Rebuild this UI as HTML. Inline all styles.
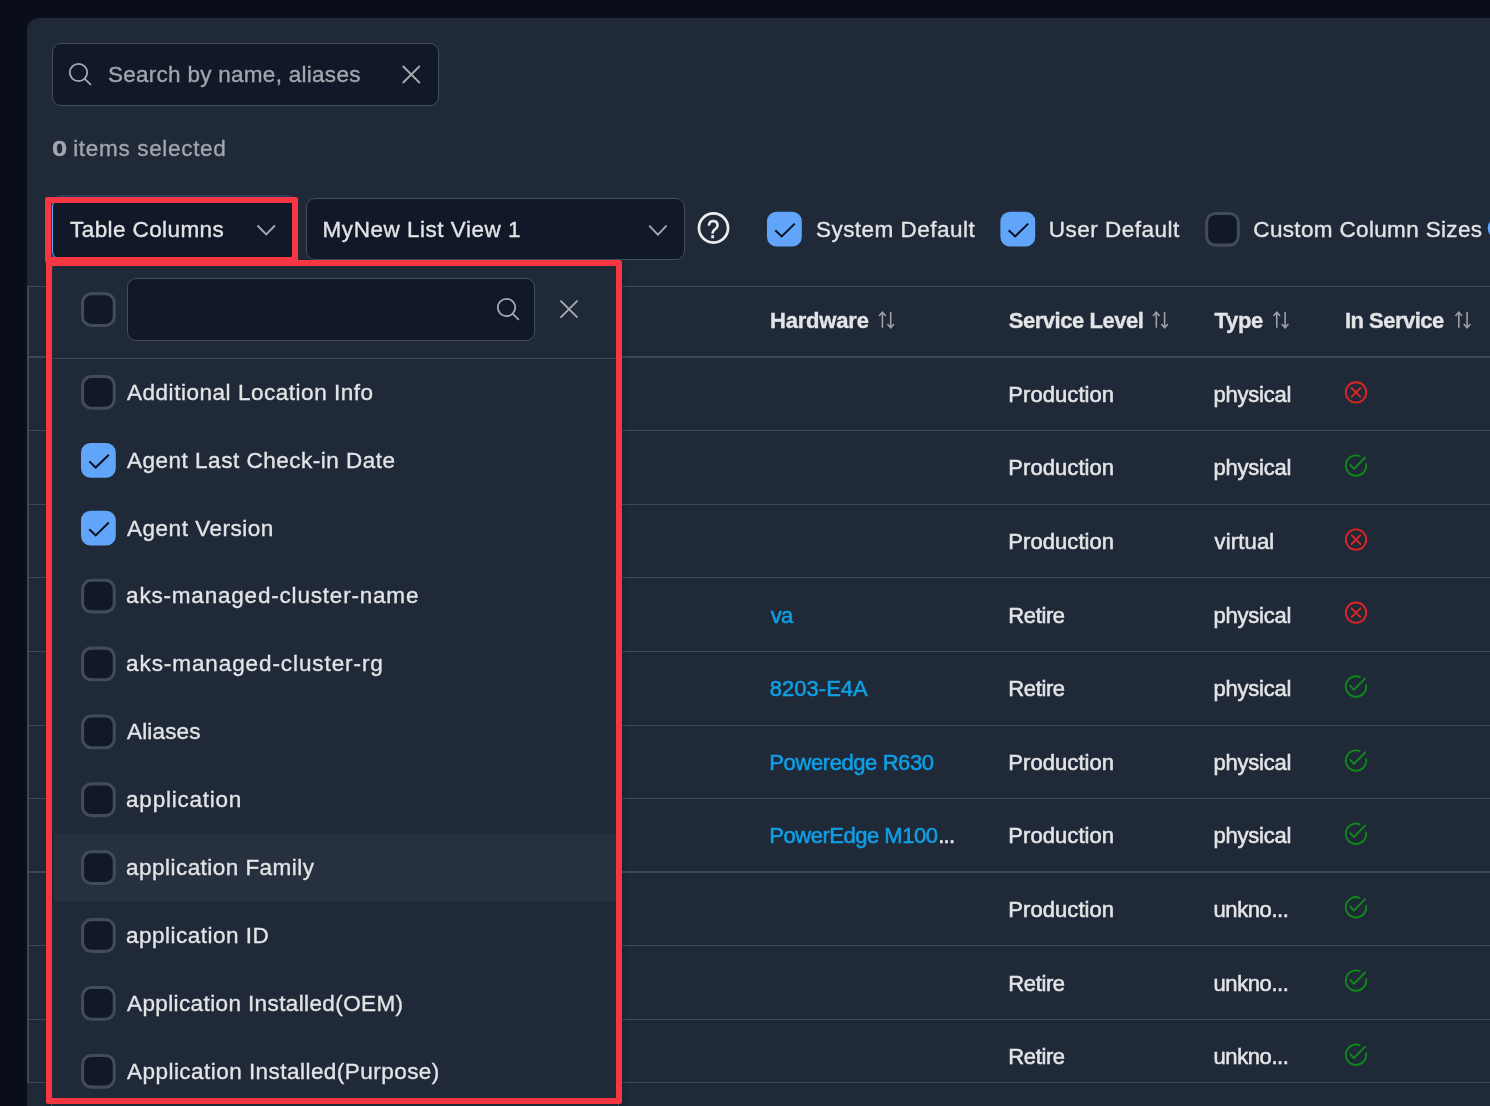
<!DOCTYPE html>
<html lang="en"><head><meta charset="utf-8"><title>Table Columns</title>
<style>
html,body{margin:0;padding:0}
body{width:1490px;height:1106px;overflow:hidden;position:relative;background:#0a0e1a;font-family:"Liberation Sans", sans-serif}
.a{position:absolute;box-sizing:border-box;display:block}
.t{position:absolute;white-space:pre;line-height:40px;height:40px}
.ln{position:absolute;height:1.5px;background:#3f4856}
</style></head><body>
<div class="a" style="left:27px;top:18px;width:1500px;height:1200px;background:#1f2937;border-radius:12px"></div>
<div class="a" style="left:52px;top:43px;width:387px;height:62.5px;background:#111827;border:1.5px solid #454e5b;border-radius:9px"></div>
<svg class="a" style="left:68px;top:62px" width="24" height="24" viewBox="0 0 24 24"><g transform="translate(0.9 0.9)"><circle cx="9.6" cy="9.6" r="8.7" fill="none" stroke="#a6a9af" stroke-width="1.8"/><path d="M15.9 15.9L21.5 21.5" stroke="#a6a9af" stroke-width="1.8" stroke-linecap="round"/></g></svg>
<svg class="a" style="left:401px;top:64px" width="21" height="21" viewBox="0 0 21 21"><g transform="translate(0.3 0.5)"><path d="M2.0 2.0L18.0 18.0M18.0 2.0L2.0 18.0" stroke="#a6a9af" stroke-width="1.9" stroke-linecap="round" fill="none"/></g></svg>
<div class="a" style="left:52px;top:198px;width:243px;height:62px;background:#111827;border:1.5px solid #60a5fa;border-radius:9px;box-shadow:0 0 0 3.1px rgba(96,165,250,.2)"></div>
<svg class="a" style="left:254px;top:222px" width="25" height="17" viewBox="0 0 25 17"><g transform="translate(0.2 0)"><path d="M3.3000000000000007 3.5L12 12.5L20.7 3.5" stroke="#a6a9af" stroke-width="1.9" stroke-linecap="butt" stroke-linejoin="miter" fill="none"/></g></svg>
<div class="a" style="left:306.2px;top:198px;width:378.4px;height:62px;background:#111827;border:1.5px solid #454e5b;border-radius:9px"></div>
<svg class="a" style="left:645px;top:222px" width="25" height="17" viewBox="0 0 25 17"><g transform="translate(0.9 0.2)"><path d="M3.3000000000000007 3.5L12 12.5L20.7 3.5" stroke="#a6a9af" stroke-width="1.9" stroke-linecap="butt" stroke-linejoin="miter" fill="none"/></g></svg>
<svg class="a" style="left:696px;top:210px" width="36" height="36" viewBox="0 0 36 36"><g transform="translate(0 0.5)"><circle cx="17.5" cy="17.5" r="14.55" fill="none" stroke="#ecedef" stroke-width="2.7"/></g></svg>
<svg class="a" style="left:767px;top:211px" width="36" height="36" viewBox="0 0 36 36"><g transform="translate(0.0 0.8)"><rect x="0" y="0" width="34.8" height="34.8" rx="9.5" fill="#60a5fa"/><path d="M8.3 18.5L14.7 24.6L27.8 11.8" stroke="#0b1120" stroke-width="2" stroke-linecap="butt" stroke-linejoin="miter" fill="none"/></g></svg>
<svg class="a" style="left:1000px;top:211px" width="36" height="36" viewBox="0 0 36 36"><g transform="translate(0.4 0.8)"><rect x="0" y="0" width="34.8" height="34.8" rx="9.5" fill="#60a5fa"/><path d="M8.3 18.5L14.7 24.6L27.8 11.8" stroke="#0b1120" stroke-width="2" stroke-linecap="butt" stroke-linejoin="miter" fill="none"/></g></svg>
<svg class="a" style="left:1205px;top:211px" width="36" height="36" viewBox="0 0 36 36"><g transform="translate(0.1 0.9)"><rect x="1.55" y="1.55" width="31.699999999999996" height="31.699999999999996" rx="8.8" fill="#111827" stroke="#424b59" stroke-width="3.1"/></g></svg>
<svg class="a" style="left:1487px;top:217px" width="4" height="24" viewBox="0 0 4 24"><g transform="translate(0 0)"><circle cx="11.7" cy="11.3" r="11" fill="#60a5fa"/></g></svg>
<div class="ln" style="left:27px;top:285.55px;width:1463px"></div>
<div class="ln" style="left:27px;top:356.45px;width:1463px"></div>
<div class="ln" style="left:27px;top:429.65px;width:1463px"></div>
<div class="ln" style="left:27px;top:503.65px;width:1463px"></div>
<div class="ln" style="left:27px;top:576.75px;width:1463px"></div>
<div class="ln" style="left:27px;top:650.55px;width:1463px"></div>
<div class="ln" style="left:27px;top:724.65px;width:1463px"></div>
<div class="ln" style="left:27px;top:797.85px;width:1463px"></div>
<div class="ln" style="left:27px;top:871.35px;width:1463px"></div>
<div class="ln" style="left:27px;top:944.65px;width:1463px"></div>
<div class="ln" style="left:27px;top:1018.85px;width:1463px"></div>
<div class="ln" style="left:27px;top:1081.75px;width:1463px"></div>
<div class="a" style="left:27px;top:286px;width:1.5px;height:796px;background:#3f4856"></div>
<svg class="a" style="left:878px;top:310px" width="19" height="20" viewBox="0 0 19 20"><g transform="translate(0.0 0.8)"><path d="M4.4 1.2V17M1.1 5.1L4.4 1.3L7.7 5.1M12.7 1.2V17M9.4 13.2L12.7 17L16 13.2" stroke="#9ca0a8" stroke-width="1.6" fill="none" stroke-linejoin="miter"/></g></svg>
<svg class="a" style="left:1151px;top:310px" width="19" height="20" viewBox="0 0 19 20"><g transform="translate(0.9 0.8)"><path d="M4.4 1.2V17M1.1 5.1L4.4 1.3L7.7 5.1M12.7 1.2V17M9.4 13.2L12.7 17L16 13.2" stroke="#9ca0a8" stroke-width="1.6" fill="none" stroke-linejoin="miter"/></g></svg>
<svg class="a" style="left:1272px;top:310px" width="19" height="20" viewBox="0 0 19 20"><g transform="translate(0.4 0.8)"><path d="M4.4 1.2V17M1.1 5.1L4.4 1.3L7.7 5.1M12.7 1.2V17M9.4 13.2L12.7 17L16 13.2" stroke="#9ca0a8" stroke-width="1.6" fill="none" stroke-linejoin="miter"/></g></svg>
<svg class="a" style="left:1454px;top:310px" width="19" height="20" viewBox="0 0 19 20"><g transform="translate(0.4 0.8)"><path d="M4.4 1.2V17M1.1 5.1L4.4 1.3L7.7 5.1M12.7 1.2V17M9.4 13.2L12.7 17L16 13.2" stroke="#9ca0a8" stroke-width="1.6" fill="none" stroke-linejoin="miter"/></g></svg>
<svg class="a" style="left:1344px;top:380px" width="25" height="25" viewBox="0 0 25 25"><g transform="translate(0 0.4)"><circle cx="12" cy="12" r="10.2" fill="none" stroke="#dc2626" stroke-width="1.9"/><path d="M7.6 7.6L16.4 16.4M16.4 7.6L7.6 16.4" stroke="#dc2626" stroke-width="1.9" stroke-linecap="round"/></g></svg>
<svg class="a" style="left:1344px;top:453px" width="25" height="25" viewBox="0 0 25 25"><g transform="translate(0 0.6)"><path d="M15.66 2.48A10.2 10.2 0 1 0 22.10 10.58" fill="none" stroke="#0e8a18" stroke-width="1.9" stroke-linecap="round"/><path d="M6.3 11.3L9.9 15.3L21.1 3.9" stroke="#0e8a18" stroke-width="1.9" stroke-linecap="round" stroke-linejoin="round" fill="none"/></g></svg>
<svg class="a" style="left:1344px;top:527px" width="25" height="25" viewBox="0 0 25 25"><g transform="translate(0 0.6)"><circle cx="12" cy="12" r="10.2" fill="none" stroke="#dc2626" stroke-width="1.9"/><path d="M7.6 7.6L16.4 16.4M16.4 7.6L7.6 16.4" stroke="#dc2626" stroke-width="1.9" stroke-linecap="round"/></g></svg>
<svg class="a" style="left:1344px;top:600px" width="25" height="25" viewBox="0 0 25 25"><g transform="translate(0 0.7)"><circle cx="12" cy="12" r="10.2" fill="none" stroke="#dc2626" stroke-width="1.9"/><path d="M7.6 7.6L16.4 16.4M16.4 7.6L7.6 16.4" stroke="#dc2626" stroke-width="1.9" stroke-linecap="round"/></g></svg>
<svg class="a" style="left:1344px;top:674px" width="25" height="25" viewBox="0 0 25 25"><g transform="translate(0 0.5)"><path d="M15.66 2.48A10.2 10.2 0 1 0 22.10 10.58" fill="none" stroke="#0e8a18" stroke-width="1.9" stroke-linecap="round"/><path d="M6.3 11.3L9.9 15.3L21.1 3.9" stroke="#0e8a18" stroke-width="1.9" stroke-linecap="round" stroke-linejoin="round" fill="none"/></g></svg>
<svg class="a" style="left:1344px;top:748px" width="25" height="25" viewBox="0 0 25 25"><g transform="translate(0 0.6)"><path d="M15.66 2.48A10.2 10.2 0 1 0 22.10 10.58" fill="none" stroke="#0e8a18" stroke-width="1.9" stroke-linecap="round"/><path d="M6.3 11.3L9.9 15.3L21.1 3.9" stroke="#0e8a18" stroke-width="1.9" stroke-linecap="round" stroke-linejoin="round" fill="none"/></g></svg>
<svg class="a" style="left:1344px;top:821px" width="25" height="25" viewBox="0 0 25 25"><g transform="translate(0 0.8)"><path d="M15.66 2.48A10.2 10.2 0 1 0 22.10 10.58" fill="none" stroke="#0e8a18" stroke-width="1.9" stroke-linecap="round"/><path d="M6.3 11.3L9.9 15.3L21.1 3.9" stroke="#0e8a18" stroke-width="1.9" stroke-linecap="round" stroke-linejoin="round" fill="none"/></g></svg>
<svg class="a" style="left:1344px;top:895px" width="25" height="25" viewBox="0 0 25 25"><g transform="translate(0 0.3)"><path d="M15.66 2.48A10.2 10.2 0 1 0 22.10 10.58" fill="none" stroke="#0e8a18" stroke-width="1.9" stroke-linecap="round"/><path d="M6.3 11.3L9.9 15.3L21.1 3.9" stroke="#0e8a18" stroke-width="1.9" stroke-linecap="round" stroke-linejoin="round" fill="none"/></g></svg>
<svg class="a" style="left:1344px;top:968px" width="25" height="25" viewBox="0 0 25 25"><g transform="translate(0 0.6)"><path d="M15.66 2.48A10.2 10.2 0 1 0 22.10 10.58" fill="none" stroke="#0e8a18" stroke-width="1.9" stroke-linecap="round"/><path d="M6.3 11.3L9.9 15.3L21.1 3.9" stroke="#0e8a18" stroke-width="1.9" stroke-linecap="round" stroke-linejoin="round" fill="none"/></g></svg>
<svg class="a" style="left:1344px;top:1042px" width="25" height="25" viewBox="0 0 25 25"><g transform="translate(0 0.8)"><path d="M15.66 2.48A10.2 10.2 0 1 0 22.10 10.58" fill="none" stroke="#0e8a18" stroke-width="1.9" stroke-linecap="round"/><path d="M6.3 11.3L9.9 15.3L21.1 3.9" stroke="#0e8a18" stroke-width="1.9" stroke-linecap="round" stroke-linejoin="round" fill="none"/></g></svg>
<div class="a" style="left:51px;top:262px;width:567.5px;height:900px;background:#1f2937;border:1.5px solid #454e5b;border-radius:9px;box-shadow:0 2px 12px rgba(0,0,0,.3)"></div>
<div class="ln" style="left:53px;top:357.6px;width:564px"></div>
<svg class="a" style="left:81px;top:292px" width="36" height="36" viewBox="0 0 36 36"><g transform="translate(0.0 0.2)"><rect x="1.55" y="1.55" width="31.699999999999996" height="31.699999999999996" rx="8.8" fill="#111827" stroke="#424b59" stroke-width="3.1"/></g></svg>
<div class="a" style="left:127px;top:278px;width:408px;height:62.6px;background:#111827;border:1.5px solid #454e5b;border-radius:9px"></div>
<svg class="a" style="left:496px;top:297px" width="24" height="24" viewBox="0 0 24 24"><g transform="translate(0.9 0.9)"><circle cx="9.6" cy="9.6" r="8.7" fill="none" stroke="#a6a9af" stroke-width="1.8"/><path d="M15.9 15.9L21.5 21.5" stroke="#a6a9af" stroke-width="1.8" stroke-linecap="round"/></g></svg>
<svg class="a" style="left:559px;top:299px" width="21" height="21" viewBox="0 0 21 21"><g transform="translate(0.0 0.1)"><path d="M2.0 2.0L18.0 18.0M18.0 2.0L2.0 18.0" stroke="#a6a9af" stroke-width="1.9" stroke-linecap="round" fill="none"/></g></svg>
<div class="a" style="left:53.5px;top:833.53px;width:563.5px;height:67.89px;background:#27303e"></div>
<svg class="a" style="left:81px;top:375px" width="36" height="36" viewBox="0 0 36 36"><g transform="translate(0.0 0.0)"><rect x="1.55" y="1.55" width="31.699999999999996" height="31.699999999999996" rx="8.8" fill="#111827" stroke="#424b59" stroke-width="3.1"/></g></svg>
<svg class="a" style="left:81px;top:442px" width="36" height="36" viewBox="0 0 36 36"><g transform="translate(0.0 0.89)"><rect x="0" y="0" width="34.8" height="34.8" rx="9.5" fill="#60a5fa"/><path d="M8.3 18.5L14.7 24.6L27.8 11.8" stroke="#0b1120" stroke-width="2" stroke-linecap="butt" stroke-linejoin="miter" fill="none"/></g></svg>
<svg class="a" style="left:81px;top:510px" width="36" height="36" viewBox="0 0 36 36"><g transform="translate(0.0 0.78)"><rect x="0" y="0" width="34.8" height="34.8" rx="9.5" fill="#60a5fa"/><path d="M8.3 18.5L14.7 24.6L27.8 11.8" stroke="#0b1120" stroke-width="2" stroke-linecap="butt" stroke-linejoin="miter" fill="none"/></g></svg>
<svg class="a" style="left:81px;top:578px" width="36" height="36" viewBox="0 0 36 36"><g transform="translate(0.0 0.67)"><rect x="1.55" y="1.55" width="31.699999999999996" height="31.699999999999996" rx="8.8" fill="#111827" stroke="#424b59" stroke-width="3.1"/></g></svg>
<svg class="a" style="left:81px;top:646px" width="36" height="36" viewBox="0 0 36 36"><g transform="translate(0.0 0.56)"><rect x="1.55" y="1.55" width="31.699999999999996" height="31.699999999999996" rx="8.8" fill="#111827" stroke="#424b59" stroke-width="3.1"/></g></svg>
<svg class="a" style="left:81px;top:714px" width="36" height="36" viewBox="0 0 36 36"><g transform="translate(0.0 0.45)"><rect x="1.55" y="1.55" width="31.699999999999996" height="31.699999999999996" rx="8.8" fill="#111827" stroke="#424b59" stroke-width="3.1"/></g></svg>
<svg class="a" style="left:81px;top:782px" width="36" height="36" viewBox="0 0 36 36"><g transform="translate(0.0 0.34)"><rect x="1.55" y="1.55" width="31.699999999999996" height="31.699999999999996" rx="8.8" fill="#111827" stroke="#424b59" stroke-width="3.1"/></g></svg>
<svg class="a" style="left:81px;top:850px" width="36" height="36" viewBox="0 0 36 36"><g transform="translate(0.0 0.23)"><rect x="1.55" y="1.55" width="31.699999999999996" height="31.699999999999996" rx="8.8" fill="#111827" stroke="#424b59" stroke-width="3.1"/></g></svg>
<svg class="a" style="left:81px;top:918px" width="36" height="36" viewBox="0 0 36 36"><g transform="translate(0.0 0.12)"><rect x="1.55" y="1.55" width="31.699999999999996" height="31.699999999999996" rx="8.8" fill="#111827" stroke="#424b59" stroke-width="3.1"/></g></svg>
<svg class="a" style="left:81px;top:986px" width="36" height="36" viewBox="0 0 36 36"><g transform="translate(0.0 0.01)"><rect x="1.55" y="1.55" width="31.699999999999996" height="31.699999999999996" rx="8.8" fill="#111827" stroke="#424b59" stroke-width="3.1"/></g></svg>
<svg class="a" style="left:81px;top:1053px" width="36" height="36" viewBox="0 0 36 36"><g transform="translate(0.0 0.9)"><rect x="1.55" y="1.55" width="31.699999999999996" height="31.699999999999996" rx="8.8" fill="#111827" stroke="#424b59" stroke-width="3.1"/></g></svg>
<div class="a" style="left:0;top:0;width:1490px;height:1106px;will-change:transform">
<span class="t" style="left:107.91px;top:55px;font-size:22.5px;color:#a3a6ac;letter-spacing:0.280px;-webkit-text-stroke:0.35px #a3a6ac">Search by name, aliases</span>
<span class="t" style="left:52.48px;top:129px;font-size:22.5px;color:#a3a6ac;letter-spacing:0.000px;font-weight:700;-webkit-text-stroke:0.35px #a3a6ac;transform:scaleX(1.216);transform-origin:0 50%">0</span>
<span class="t" style="left:73.18px;top:129px;font-size:22.5px;color:#a3a6ac;letter-spacing:0.676px;-webkit-text-stroke:0.35px #a3a6ac">items selected</span>
<span class="t" style="left:70.08px;top:210px;font-size:22.5px;color:#e3e4e6;letter-spacing:0.399px;-webkit-text-stroke:0.35px #e3e4e6">Table Columns</span>
<span class="t" style="left:322.62px;top:210px;font-size:22.5px;color:#e3e4e6;letter-spacing:0.519px;-webkit-text-stroke:0.35px #e3e4e6">MyNew List View 1</span>
<span class="t" style="left:815.91px;top:210px;font-size:22.5px;color:#e3e4e6;letter-spacing:0.482px;-webkit-text-stroke:0.35px #e3e4e6">System Default</span>
<span class="t" style="left:1048.72px;top:210px;font-size:22.5px;color:#e3e4e6;letter-spacing:0.499px;-webkit-text-stroke:0.35px #e3e4e6">User Default</span>
<span class="t" style="left:1253.31px;top:210px;font-size:22.5px;color:#e3e4e6;letter-spacing:0.343px;-webkit-text-stroke:0.35px #e3e4e6">Custom Column Sizes</span>
<span class="t" style="left:769.99px;top:301px;font-size:22.0px;color:#e3e4e6;letter-spacing:-0.188px;font-weight:700;-webkit-text-stroke:0.35px #e3e4e6">Hardware</span>
<span class="t" style="left:1008.69px;top:301px;font-size:22.0px;color:#e3e4e6;letter-spacing:-0.454px;font-weight:700;-webkit-text-stroke:0.35px #e3e4e6">Service Level</span>
<span class="t" style="left:1214.61px;top:301px;font-size:22.0px;color:#e3e4e6;letter-spacing:-0.325px;font-weight:700;-webkit-text-stroke:0.35px #e3e4e6">Type</span>
<span class="t" style="left:1344.89px;top:301px;font-size:22.0px;color:#e3e4e6;letter-spacing:-0.514px;font-weight:700;-webkit-text-stroke:0.35px #e3e4e6">In Service</span>
<span class="t" style="left:127.01px;top:373px;font-size:22.5px;color:#e3e4e6;letter-spacing:0.530px;-webkit-text-stroke:0.35px #e3e4e6">Additional Location Info</span>
<span class="t" style="left:127.01px;top:441px;font-size:22.5px;color:#e3e4e6;letter-spacing:0.508px;-webkit-text-stroke:0.35px #e3e4e6">Agent Last Check-in Date</span>
<span class="t" style="left:127.01px;top:509px;font-size:22.5px;color:#e3e4e6;letter-spacing:0.524px;-webkit-text-stroke:0.35px #e3e4e6">Agent Version</span>
<span class="t" style="left:126.10px;top:576px;font-size:22.5px;color:#e3e4e6;letter-spacing:0.803px;-webkit-text-stroke:0.35px #e3e4e6">aks-managed-cluster-name</span>
<span class="t" style="left:126.10px;top:644px;font-size:22.5px;color:#e3e4e6;letter-spacing:0.910px;-webkit-text-stroke:0.35px #e3e4e6">aks-managed-cluster-rg</span>
<span class="t" style="left:127.01px;top:712px;font-size:22.5px;color:#e3e4e6;letter-spacing:0.163px;-webkit-text-stroke:0.35px #e3e4e6">Aliases</span>
<span class="t" style="left:126.10px;top:780px;font-size:22.5px;color:#e3e4e6;letter-spacing:0.760px;-webkit-text-stroke:0.35px #e3e4e6">application</span>
<span class="t" style="left:126.10px;top:848px;font-size:22.5px;color:#e3e4e6;letter-spacing:0.458px;-webkit-text-stroke:0.35px #e3e4e6">application Family</span>
<span class="t" style="left:126.10px;top:916px;font-size:22.5px;color:#e3e4e6;letter-spacing:0.495px;-webkit-text-stroke:0.35px #e3e4e6">application ID</span>
<span class="t" style="left:127.01px;top:984px;font-size:22.5px;color:#e3e4e6;letter-spacing:0.387px;-webkit-text-stroke:0.35px #e3e4e6">Application Installed(OEM)</span>
<span class="t" style="left:127.01px;top:1052px;font-size:22.5px;color:#e3e4e6;letter-spacing:0.463px;-webkit-text-stroke:0.35px #e3e4e6">Application Installed(Purpose)</span>
<span class="t" style="left:1008.35px;top:375px;font-size:22.0px;color:#e3e4e6;letter-spacing:0.057px;-webkit-text-stroke:0.55px #e3e4e6">Production</span>
<span class="t" style="left:1213.50px;top:375px;font-size:22.0px;color:#e3e4e6;letter-spacing:-0.225px;-webkit-text-stroke:0.55px #e3e4e6">physical</span>
<span class="t" style="left:1008.35px;top:448px;font-size:22.0px;color:#e3e4e6;letter-spacing:0.057px;-webkit-text-stroke:0.55px #e3e4e6">Production</span>
<span class="t" style="left:1213.50px;top:448px;font-size:22.0px;color:#e3e4e6;letter-spacing:-0.225px;-webkit-text-stroke:0.55px #e3e4e6">physical</span>
<span class="t" style="left:1008.35px;top:522px;font-size:22.0px;color:#e3e4e6;letter-spacing:0.057px;-webkit-text-stroke:0.55px #e3e4e6">Production</span>
<span class="t" style="left:1214.61px;top:522px;font-size:22.0px;color:#e3e4e6;letter-spacing:0.143px;-webkit-text-stroke:0.55px #e3e4e6">virtual</span>
<span class="t" style="left:1008.35px;top:596px;font-size:22.0px;color:#e3e4e6;letter-spacing:-0.396px;-webkit-text-stroke:0.55px #e3e4e6">Retire</span>
<span class="t" style="left:1213.50px;top:596px;font-size:22.0px;color:#e3e4e6;letter-spacing:-0.225px;-webkit-text-stroke:0.55px #e3e4e6">physical</span>
<span class="t" style="left:770.71px;top:596px;font-size:22.0px;color:#0f9fe6;letter-spacing:-0.800px;-webkit-text-stroke:0.55px #0f9fe6">va</span>
<span class="t" style="left:1008.35px;top:669px;font-size:22.0px;color:#e3e4e6;letter-spacing:-0.396px;-webkit-text-stroke:0.55px #e3e4e6">Retire</span>
<span class="t" style="left:1213.50px;top:669px;font-size:22.0px;color:#e3e4e6;letter-spacing:-0.225px;-webkit-text-stroke:0.55px #e3e4e6">physical</span>
<span class="t" style="left:769.80px;top:669px;font-size:22.0px;color:#0f9fe6;letter-spacing:0.018px;-webkit-text-stroke:0.55px #0f9fe6">8203-E4A</span>
<span class="t" style="left:1008.35px;top:743px;font-size:22.0px;color:#e3e4e6;letter-spacing:0.057px;-webkit-text-stroke:0.55px #e3e4e6">Production</span>
<span class="t" style="left:1213.50px;top:743px;font-size:22.0px;color:#e3e4e6;letter-spacing:-0.225px;-webkit-text-stroke:0.55px #e3e4e6">physical</span>
<span class="t" style="left:769.35px;top:743px;font-size:22.0px;color:#0f9fe6;letter-spacing:-0.412px;-webkit-text-stroke:0.55px #0f9fe6">Poweredge R630</span>
<span class="t" style="left:1008.35px;top:816px;font-size:22.0px;color:#e3e4e6;letter-spacing:0.057px;-webkit-text-stroke:0.55px #e3e4e6">Production</span>
<span class="t" style="left:1213.50px;top:816px;font-size:22.0px;color:#e3e4e6;letter-spacing:-0.225px;-webkit-text-stroke:0.55px #e3e4e6">physical</span>
<span class="t" style="left:769.35px;top:816px;font-size:22.0px;color:#0f9fe6;letter-spacing:-0.489px;-webkit-text-stroke:0.55px #0f9fe6">PowerEdge M100</span>
<span class="t" style="left:1008.35px;top:890px;font-size:22.0px;color:#e3e4e6;letter-spacing:0.057px;-webkit-text-stroke:0.55px #e3e4e6">Production</span>
<span class="t" style="left:1213.52px;top:890px;font-size:22.0px;color:#e3e4e6;letter-spacing:-0.414px;-webkit-text-stroke:0.55px #e3e4e6">unkno...</span>
<span class="t" style="left:1008.35px;top:964px;font-size:22.0px;color:#e3e4e6;letter-spacing:-0.396px;-webkit-text-stroke:0.55px #e3e4e6">Retire</span>
<span class="t" style="left:1213.52px;top:964px;font-size:22.0px;color:#e3e4e6;letter-spacing:-0.414px;-webkit-text-stroke:0.55px #e3e4e6">unkno...</span>
<span class="t" style="left:1008.35px;top:1037px;font-size:22.0px;color:#e3e4e6;letter-spacing:-0.396px;-webkit-text-stroke:0.55px #e3e4e6">Retire</span>
<span class="t" style="left:1213.52px;top:1037px;font-size:22.0px;color:#e3e4e6;letter-spacing:-0.414px;-webkit-text-stroke:0.55px #e3e4e6">unkno...</span>
<span class="t" style="left:938.30px;top:816px;font-size:22.0px;color:#e3e4e6;letter-spacing:-0.800px;-webkit-text-stroke:0.55px #e3e4e6">...</span>
<span class="t" style="left:706.2px;top:208.6px;font-size:25.5px;font-weight:400;color:#ecedef;-webkit-text-stroke:0.6px #ecedef;transform:scaleX(.86)">?</span>
</div>
<div class="a" style="left:45.3px;top:197.2px;width:253.0px;height:66.0px;border:6.5px solid #f73543;border-radius:2.5px"></div>
<div class="a" style="left:45.9px;top:260.4px;width:575.9px;height:843.7px;border:6.5px solid #f73543;border-radius:2.5px"></div>
</body></html>
